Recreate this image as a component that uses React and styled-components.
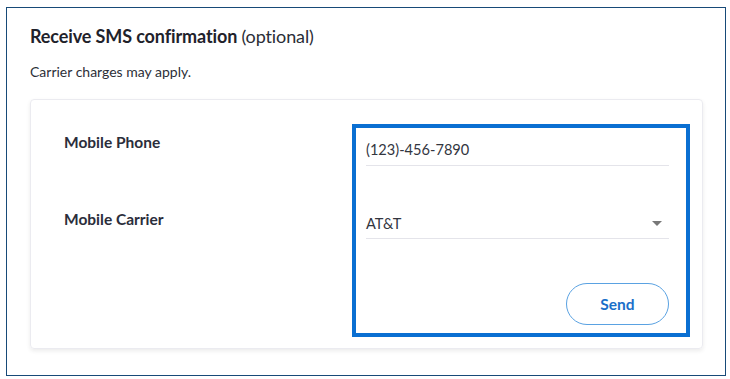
import React from "react";
import styled, { createGlobalStyle } from "styled-components";

const Global = createGlobalStyle`
  html, body { margin: 0; padding: 0; background: #ffffff; }
  body { font-family: Lato, "Noto Sans", sans-serif; color: #23262f; }
  * { box-sizing: border-box; }
`;

const Page = styled.div`
  padding: 7px 4px 3px 6px;
`;

const Panel = styled.section`
  width: 720px;
  height: 369px;
  border: 1px solid #174a78;
  padding: 16px 22px 0 23px;
  display: flex;
  flex-direction: column;
`;

const Title = styled.h2`
  margin: 0;
  font-size: 18px;
  line-height: 24px;
  font-weight: 700;
  color: #1f222b;
  letter-spacing: -0.12px;
`;

const Optional = styled.span`
  font-weight: 400;
  color: #2a2d36;
`;

const Note = styled.p`
  margin: 15px 0 0;
  font-size: 14px;
  line-height: 18px;
  color: #2c2f38;
`;

const Card = styled.div`
  margin-top: 18px;
  height: 250px;
  border: 1px solid #ebebf0;
  border-radius: 4px;
  box-shadow: 0 2px 4px rgba(0, 0, 0, 0.08);
  display: grid;
  grid-template-columns: 1fr 338px;
  padding: 24px 12px 11px 33px;
`;

const Labels = styled.div`
  display: flex;
  flex-direction: column;
  padding-top: 8px;
  gap: 57px;
`;

const Label = styled.div`
  font-size: 15.5px;
  line-height: 20px;
  font-weight: 700;
  color: #2b2e3b;
`;

const Highlight = styled.div`
  border: 4px solid #0a6fd2;
  padding: 11px 17px 8px 10px;
  display: flex;
  flex-direction: column;
`;

const Field = styled.div`
  display: flex;
  align-items: center;
  justify-content: space-between;
  height: ${(p) => p.$h}px;
  padding-bottom: ${(p) => p.$pb}px;
  margin-top: ${(p) => p.$mt || 0}px;
  border-bottom: 1px solid #e4e4ea;
  font-size: 14.6px;
  color: #33363f;
`;

const Caret = styled.span`
  width: 0;
  height: 0;
  margin-right: 7px;
  border-left: 5px solid transparent;
  border-right: 5px solid transparent;
  border-top: 5px solid #787878;
`;

const Actions = styled.div`
  margin-top: auto;
  display: flex;
  justify-content: flex-end;
`;

const SendButton = styled.button`
  width: 103px;
  height: 42px;
  border-radius: 21px;
  border: 1px solid #5aa2e2;
  background: #ffffff;
  color: #1a6fc9;
  font-family: inherit;
  font-size: 15.5px;
  font-weight: 700;
  cursor: pointer;
`;

export default function App() {
  return (
    <>
      <Global />
      <Page>
        <Panel>
          <Title>
            Receive SMS confirmation <Optional>(optional)</Optional>
          </Title>
          <Note>Carrier charges may apply.</Note>
          <Card>
            <Labels>
              <Label>Mobile Phone</Label>
              <Label>Mobile Carrier</Label>
            </Labels>
            <Highlight>
              <Field $h={27} $pb={5}>(123)-456-7890</Field>
              <Field $h={26} $pb={4} $mt={47}>
                <span>AT&amp;T</span>
                <Caret />
              </Field>
              <Actions>
                <SendButton>Send</SendButton>
              </Actions>
            </Highlight>
          </Card>
        </Panel>
      </Page>
    </>
  );
}
